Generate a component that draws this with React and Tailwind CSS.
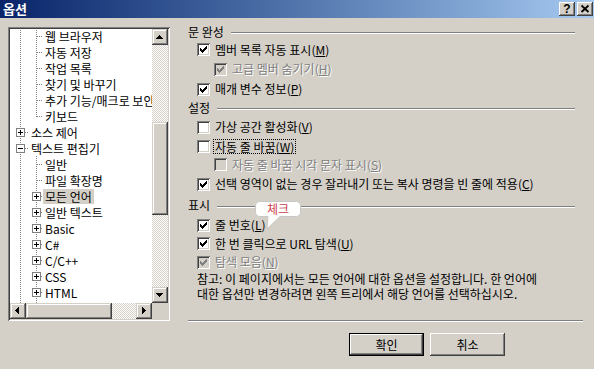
import React from "react";

const raisedBtn =
  "shadow-[inset_-1px_-1px_0_#404040,inset_1px_1px_0_#ffffff,inset_-2px_-2px_0_#808080,inset_2px_2px_0_#d4d0c8]";
const raisedScroll =
  "shadow-[inset_-1px_-1px_0_#404040,inset_1px_1px_0_#d4d0c8,inset_-2px_-2px_0_#808080,inset_2px_2px_0_#ffffff]";
const sunken =
  "shadow-[inset_1px_1px_0_#808080,inset_-1px_-1px_0_#ffffff,inset_2px_2px_0_#404040,inset_-2px_-2px_0_#d4d0c8]";
const checker =
  "bg-white bg-[image:repeating-conic-gradient(#d4d0c8_0_25%,#ffffff_0_50%)] bg-size-[2px_2px]";

const arrows = {
  up: "M4 10h7v-1h-1v-1h-1v-1h-1v-1h-1v1h-1v1h-1v1h-1z",
  down: "M4 6h7v1h-1v1h-1v1h-1v1h-1v-1h-1v-1h-1v-1h-1z",
  left: "M9 4v7h-1v-1h-1v-1h-1v-1h-1v-1h1v-1h1v-1h1v-1z",
  right: "M6 4v7h1v-1h1v-1h1v-1h1v-1h-1v-1h-1v-1h-1v-1z",
};

function ScrollBtn({ dir }) {
  return (
    <div className={`w-[16px] h-[16px] shrink-0 bg-[#d4d0c8] ${raisedScroll}`}>
      <svg width="16" height="16" viewBox="0 0 16 16" className="block">
        <path d={arrows[dir]} fill="#000" />
      </svg>
    </div>
  );
}

function Guide({ level, box, l2 }) {
  const dot = { stroke: "#808080", strokeDasharray: "1 1", strokeWidth: 1 };
  if (level === 1) {
    return (
      <svg width="19" height="16" viewBox="0 0 19 16" className="block shrink-0">
        <line x1="10.5" y1="0" x2="10.5" y2="16" {...dot} />
        <line x1="15" y1="8.5" x2="19" y2="8.5" {...dot} />
        <rect x="6.5" y="4.5" width="8" height="8" fill="#fff" stroke="#808080" />
        <line x1="8" y1="8.5" x2="13" y2="8.5" stroke="#000" />
        {box === "+" && <line x1="10.5" y1="6" x2="10.5" y2="11" stroke="#000" />}
      </svg>
    );
  }
  return (
    <svg width="33" height="16" viewBox="0 0 33 16" className="block shrink-0">
      <line x1="10.5" y1="0" x2="10.5" y2="16" {...dot} />
      {l2 === "full" && <line x1="26.5" y1="0" x2="26.5" y2="16" {...dot} />}
      {l2 === "half" && <line x1="26.5" y1="0" x2="26.5" y2="9" {...dot} />}
      <line x1={box ? 31 : 27} y1="8.5" x2="33" y2="8.5" {...dot} />
      {box && (
        <g>
          <rect x="22.5" y="4.5" width="8" height="8" fill="#fff" stroke="#808080" />
          <line x1="24" y1="8.5" x2="29" y2="8.5" stroke="#000" />
          <line x1="26.5" y1="6" x2="26.5" y2="11" stroke="#000" />
        </g>
      )}
    </svg>
  );
}

const treeRows = [
  { t: "웹 브라우저", level: 2, l2: "full" },
  { t: "자동 저장", level: 2, l2: "full" },
  { t: "작업 목록", level: 2, l2: "full" },
  { t: "찾기 및 바꾸기", level: 2, l2: "full" },
  { t: "추가 기능/매크로 보안", level: 2, l2: "full" },
  { t: "키보드", level: 2, l2: "half" },
  { t: "소스 제어", level: 1, box: "+" },
  { t: "텍스트 편집기", level: 1, box: "-" },
  { t: "일반", level: 2, l2: "full" },
  { t: "파일 확장명", level: 2, l2: "full" },
  { t: "모든 언어", level: 2, l2: "full", box: "+", sel: true },
  { t: "일반 텍스트", level: 2, l2: "full", box: "+" },
  { t: "Basic", level: 2, l2: "full", box: "+" },
  { t: "C#", level: 2, l2: "full", box: "+" },
  { t: "C/C++", level: 2, l2: "full", box: "+" },
  { t: "CSS", level: 2, l2: "full", box: "+" },
  { t: "HTML", level: 2, l2: "full", box: "+" },
  { t: "JScript", level: 2, l2: "full", box: "+" },
];

function Tree() {
  return (
    <div
      className={`mt-[9px] w-[162px] h-[294px] shrink-0 p-[2px] bg-white ${sunken} grid grid-cols-[142px_16px] grid-rows-[274px_16px]`}
    >
      <div className="overflow-hidden bg-white">
        <div className="-mt-[1px]">
          {treeRows.map((r) => (
            <div key={r.t} className="flex h-[16px] items-center whitespace-nowrap">
              <Guide level={r.level} box={r.box} l2={r.l2} />
              <span
                className={`px-[2px] leading-[15px] ${r.sel ? "bg-[#d4d0c8]" : ""}`}
              >
                {r.t}
              </span>
            </div>
          ))}
        </div>
      </div>
      <div className="flex flex-col">
        <ScrollBtn dir="up" />
        <div className={`h-[77px] ${checker}`} />
        <div className={`h-[93px] bg-[#d4d0c8] ${raisedScroll}`} />
        <div className={`flex-1 ${checker}`} />
        <ScrollBtn dir="down" />
      </div>
      <div className="flex">
        <ScrollBtn dir="left" />
        <div className={`w-[86px] bg-[#d4d0c8] ${raisedScroll}`} />
        <div className={`flex-1 ${checker}`} />
        <ScrollBtn dir="right" />
      </div>
      <div className="bg-[#d4d0c8]" />
    </div>
  );
}

function CheckBox({ checked, disabled }) {
  return (
    <div
      className={`w-[13px] h-[13px] shrink-0 ${sunken} ${disabled ? "bg-[#d4d0c8]" : "bg-white"}`}
    >
      {checked && (
        <svg width="13" height="13" viewBox="0 0 13 13" className="block">
          <path
            d="M3 5h1v1h1v1h1v-1h1v-1h1v-1h1v-1h1v3h-1v1h-1v1h-1v1h-1v1h-1v-1h-1v-1h-1z"
            fill={disabled ? "#808080" : "#000"}
          />
        </svg>
      )}
    </div>
  );
}

function Label({ text, k, disabled }) {
  return (
    <span
      className={`whitespace-nowrap ${disabled ? "text-[#808080] [text-shadow:1px_1px_0_#ffffff]" : ""}`}
    >
      {text}(<span className="underline">{k}</span>)
    </span>
  );
}

function Option({ h, indent, checked, disabled, text, k, focus }) {
  return (
    <div className={`flex items-center ${h} ${indent ? "pl-[26px]" : "pl-[9px]"}`}>
      <CheckBox checked={checked} disabled={disabled} />
      {focus ? (
        <span className="ml-[3px] px-[1px] border border-dotted border-black leading-[13px]">
          <Label text={text} k={k} />
        </span>
      ) : (
        <span className="ml-[5px]">
          <Label text={text} k={k} disabled={disabled} />
        </span>
      )}
    </div>
  );
}

function Header({ title, h, pt, lineTop }) {
  return (
    <div className={`flex items-start ${h}`}>
      <span className={`${pt} whitespace-nowrap`}>{title}</span>
      <div
        className={`flex-1 ml-[7px] mr-[8px] ${lineTop} border-t border-t-[#808080] border-b border-b-white`}
      />
    </div>
  );
}

function Button({ label, primary }) {
  if (primary) {
    return (
      <div className="w-[75px] h-[23px] border border-black">
        <div className={`w-full h-full flex items-center justify-center bg-[#d4d0c8] ${raisedBtn}`}>
          {label}
        </div>
      </div>
    );
  }
  return (
    <div
      className={`w-[75px] h-[23px] flex items-center justify-center bg-[#d4d0c8] ${raisedBtn}`}
    >
      {label}
    </div>
  );
}

function Balloon() {
  return (
    <div className="absolute left-[64px] top-[175px] w-[52px] h-[32px]">
      <svg width="52" height="32" viewBox="0 0 52 32" className="block">
        <path
          d="M7.5 2.5H44.5Q48.5 2.5 48.5 6.5V13.5Q48.5 17.5 44.5 17.5H28L15 30L16 17.5H7.5Q3.5 17.5 3.5 13.5V6.5Q3.5 2.5 7.5 2.5Z"
          fill="#fffffe"
          stroke="#c8c8c8"
        />
      </svg>
      <span className="absolute left-[4px] top-[2px] w-[44px] h-[16px] flex items-center justify-center text-[#cc3f4e] leading-[16px]">
        체크
      </span>
    </div>
  );
}

export default function App() {
  return (
    <div className="w-[594px] h-[369px] overflow-hidden bg-[#d4d0c8] text-[12px] leading-[16px] text-black font-['Noto_Sans_CJK_KR',sans-serif]">
      <div className="h-[18px] flex items-center bg-linear-to-r from-[#0a246a] to-[#a6caf0] pl-[3px] pr-[1px]">
        <span className="text-white font-bold text-[13px] leading-[18px]">옵션</span>
        <div className="ml-auto flex gap-[2px]">
          <div
            className={`w-[16px] h-[14px] bg-[#d4d0c8] ${raisedBtn} flex items-center justify-center font-['Liberation_Sans',sans-serif] font-bold text-[12px] leading-[14px]`}
          >
            ?
          </div>
          <div className={`w-[16px] h-[14px] bg-[#d4d0c8] ${raisedBtn}`}>
            <svg width="16" height="14" viewBox="0 0 16 14" className="block">
              <path d="M4.5 3.5l7 6.5M11.5 3.5l-7 6.5" stroke="#000" strokeWidth="1.8" />
            </svg>
          </div>
        </div>
      </div>

      <div className="flex pl-[8px]">
        <Tree />

        <div className="relative ml-[18px] mt-[6px] w-[395px] flex flex-col">
          <Header title="문 완성" h="h-[16px]" pt="" lineTop="mt-[8px]" />
          <Option h="h-[19px]" checked text="멤버 목록 자동 표시" k="M" />
          <Option h="h-[20px]" indent checked disabled text="고급 멤버 숨기기" k="H" />
          <Option h="h-[20px]" checked text="매개 변수 정보" k="P" />

          <Header title="설정" h="h-[18px]" pt="pt-[1px]" lineTop="mt-[9px]" />
          <Option h="h-[20px]" text="가상 공간 활성화" k="V" />
          <Option h="h-[18px]" focus text="자동 줄 바꿈" k="W" />
          <Option h="h-[19px]" indent disabled text="자동 줄 바꿈 시각 문자 표시" k="S" />
          <Option
            h="h-[20px]"
            checked
            text="선택 영역이 없는 경우 잘라내기 또는 복사 명령을 빈 줄에 적용"
            k="C"
          />

          <Header title="표시" h="h-[22px]" pt="pt-[3px]" lineTop="mt-[12px]" />
          <Option h="h-[18px]" checked text="줄 번호" k="L" />
          <Option h="h-[19px]" checked text="한 번 클릭으로 URL 탐색" k="U" />
          <Option h="h-[18px]" checked disabled text="탐색 모음" k="N" />

          <p className="pl-[9px] leading-[15px] whitespace-nowrap">
            참고: 이 페이지에서는 모든 언어에 대한 옵션을 설정합니다. 한 언어에
            <br />
            대한 옵션만 변경하려면 왼쪽 트리에서 해당 언어를 선택하십시오.
          </p>

          <div className="mt-[19px] border-t border-t-[#808080] border-b border-b-white" />

          <div className="mt-[11px] pl-[161px] flex gap-[6px]">
            <Button label="확인" primary />
            <Button label="취소" />
          </div>

          <Balloon />
        </div>
      </div>
    </div>
  );
}
